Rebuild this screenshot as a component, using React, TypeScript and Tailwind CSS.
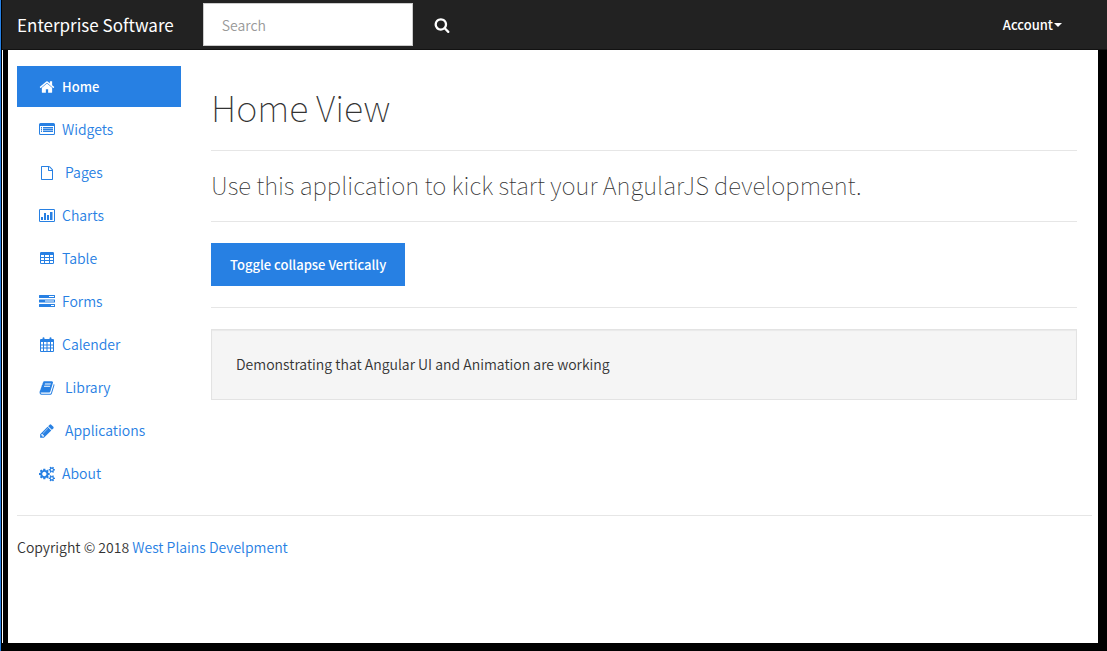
import { useState, type ReactNode } from "react";

function Glyph({ children }: { children: ReactNode }) {
  return (
    <svg viewBox="0 0 1792 1792" className="h-4 w-4 shrink-0 fill-current" aria-hidden="true">
      {children}
    </svg>
  );
}

const HomeIcon = () => (
  <Glyph>
    <path d="M1472 992v480q0 26-19 45t-45 19h-384v-384h-256v384h-384q-26 0-45-19t-19-45v-480q0-1 .5-3t.5-3l575-474 575 474q1 2 1 6zm223-69l-62 74q-8 9-21 11h-3q-13 0-21-7l-692-577-692 577q-12 8-24 7-13-2-21-11l-62-74q-8-10-7-23.5t11-21.5l719-599q32-26 76-26t76 26l244 204v-195q0-14 9-23t23-9h192q14 0 23 9t9 23v408l219 182q10 8 11 21.5t-7 23.5z" />
  </Glyph>
);

const ListIcon = () => (
  <svg viewBox="0 0 16 16" className="h-4 w-4 shrink-0 fill-current" aria-hidden="true">
    <path fillRule="evenodd" d="M1.5 1h13A1.5 1.5 0 0 1 16 2.500v9a1.500 1.500 0 0 1-1.500 1.500h-13A1.500 1.500 0 0 1 0 11.500v-9A1.500 1.500 0 0 1 1.500 1zM1 4v7.500c0 .300.200.500.500.500h13c.300 0 .500-.200.500-.500V4z" />
    <path d="M2 5h1v1H2zM4 5h10v1H4zM2 7h1v1H2zM4 7h10v1H4zM2 9h1v1H2zM4 9h10v1H4z" />
    <path opacity=".5" d="M2 6h1v1H2zM4 6h10v1H4zM2 8h1v1H2zM4 8h10v1H4z" />
  </svg>
);

const FileIcon = () => (
  <svg viewBox="0 0 1792 1792" className="mx-px h-[14px] w-[14px] shrink-0 fill-current" aria-hidden="true">
    <path d="M1596 380q28 28 48 76t20 88v1152q0 40-28 68t-68 28h-1344q-40 0-68-28t-28-68v-1600q0-40 28-68t68-28h896q40 0 88 20t76 48zm-444-244v376h376q-10-29-22-41l-313-313q-12-12-41-22zm384 1528v-1024h-416q-40 0-68-28t-28-68v-416h-768v1536h1280z" />
  </svg>
);

const ChartIcon = () => (
  <svg viewBox="0 0 16 16" className="h-4 w-4 shrink-0 fill-current" aria-hidden="true">
    <path fillRule="evenodd" d="M1.200 1h13.600Q16 1 16 2.200v10.600q0 1.200-1.200 1.200H1.200Q0 14 0 12.800V2.200Q0 1 1.200 1zM1 2v11h14V2z" />
    <path d="M2 9h2v3H2zM5 5h2v7H5zM8 7h2v5H8zM11 4h2.500v8H11z" />
  </svg>
);

const TableIcon = () => (
  <svg viewBox="0 0 16 16" className="h-4 w-4 shrink-0 fill-current" aria-hidden="true">
    <path fillRule="evenodd" d="M2.200 1h11.600Q15 1 15 2.200v9.600q0 1.200-1.200 1.200H2.200Q1 13 1 11.800V2.200Q1 1 2.200 1zM2 4v2h3V4zM6 4v2h4V4zM11 4v2H14V4zM2 7v2h3V7zM6 7v2h4V7zM11 7v2H14V7zM2 10v2h3v-2zM6 10v2h4v-2zM11 10v2H14v-2z" />
  </svg>
);

const TasksIcon = () => (
  <svg viewBox="0 0 16 16" className="h-4 w-4 shrink-0 fill-current" aria-hidden="true">
    <path fillRule="evenodd" d="M.500 1h15q.500 0 .500.500v2q0 .500-.500.500H.500Q0 4 0 3.500v-2Q0 1 .500 1zM10 2v1h5V2zM.500 5.500h15q.500 0 .500.500v2q0 .500-.500.500H.500Q0 8.500 0 8V6q0-.500.500-.500zM6 6.500v1h9v-1zM.500 10h15q.500 0 .500.500v2q0 .500-.500.500H.500q-.500 0-.500-.500v-2q0-.500.500-.500zM12 11v1h3v-1z" />
  </svg>
);

const CalendarIcon = () => (
  <svg viewBox="0 0 16 16" className="h-4 w-4 shrink-0 fill-current" aria-hidden="true">
    <path fillRule="evenodd" d="M2 2h1.500V1.500Q3.500.200 4.500.200t1 1.300V2h5V1.500q0-1.300 1-1.300t1 1.300V2H14q1 0 1 1v11q0 1-1 1H2q-1 0-1-1V3q0-1 1-1zM2 5v2.500h2V5zM5 5v2.500h2.500V5zM8.500 5v2.500H11V5zM12 5v2.500h2V5zM2 8.500v2h2v-2zM5 8.500v2h2.500v-2zM8.500 8.500v2H11v-2zM12 8.500v2h2v-2zM2 11.500V14h2v-2.500zM5 11.500V14h2.500v-2.500zM8.500 11.500V14H11v-2.500zM12 11.500V14h2v-2.500z" />
  </svg>
);

const BookIcon = () => (
  <Glyph>
    <path d="M1703 478q40 57 18 129l-275 906q-19 64-76.5 107.5t-122.5 43.5h-923q-77 0-148.5-53.5t-99.5-131.5q-24-67-2-127 0-4 3-27t4-37q1-8-3-21.5t-3-19.5q2-11 8-21t16.5-23.5 16.5-23.5q23-38 45-91.5t30-91.5q3-10 .5-30t-.5-28q3-11 17-28t17-23q21-36 42-92t25-90q1-9-2.5-32t.5-28q4-13 22-30.5t22-22.5q19-26 42.5-84.5t27.5-96.5q1-8-3-25.5t-2-26.5q2-8 9-18t18-23 17-21q8-12 16.5-30.5t15-35 16-36 19.5-32 26.5-23.5 36-11.5 47.5 5.5l-1 3q38-9 51-9h761q74 0 114 56t18 130l-274 906q-36 119-71.5 153.5t-128.5 34.5h-869q-27 0-38 15-11 16-1 43 24 70 144 70h923q29 0 56-15.5t35-41.5l300-987q7-22 5-57 38 15 59 43zm-1064 2q-4 13 2 22.5t20 9.5h608q13 0 25.5-9.5t16.5-22.5l21-64q4-13-2-22.5t-20-9.5h-608q-13 0-25.5 9.5t-16.5 22.5zm-83 256q-4 13 2 22.5t20 9.5h608q13 0 25.5-9.5t16.5-22.5l21-64q4-13-2-22.5t-20-9.5h-608q-13 0-25.5 9.5t-16.5 22.5z" />
  </Glyph>
);

const PencilIcon = () => (
  <Glyph>
    <path d="M491 1536l91-91-235-235-91 91v107h128v128h107zm523-928q0-22-22-22-10 0-17 7l-542 542q-7 7-7 17 0 22 22 22 10 0 17-7l542-542q7-7 7-17zm-54-192l416 416-832 832h-416v-416zm683 96q0 53-37 90l-166 166-416-416 166-165q36-38 90-38 53 0 91 38l235 234q37 39 37 91z" />
  </Glyph>
);

const CogsIcon = () => (
  <svg viewBox="0 0 1920 1792" className="h-4 w-4 shrink-0 fill-current" aria-hidden="true">
    <path d="M896 896q0-106-75-181t-181-75-181 75-75 181 75 181 181 75 181-75 75-181zm768 512q0-52-38-90t-90-38-90 38-38 90q0 53 37.5 90.5t90.5 37.5 90.5-37.5 37.5-90.5zm0-1024q0-52-38-90t-90-38-90 38-38 90q0 53 37.5 90.5t90.5 37.5 90.5-37.5 37.5-90.5zm-384 421v185q0 10-7 19.5t-16 10.5l-155 24q-11 35-32 76 34 48 90 115 7 11 7 20 0 12-7 19-23 30-82.5 89.5t-78.5 59.5q-11 0-21-7l-115-90q-37 19-77 31-11 108-23 155-7 24-30 24h-186q-11 0-20-7.5t-10-17.5l-23-153q-34-10-75-31l-118 89q-7 7-20 7-11 0-21-8-144-133-144-160 0-9 7-19 10-14 41-53t47-61q-23-44-35-82l-152-24q-10-1-17-9.5t-7-19.5v-185q0-10 7-19.5t16-10.5l155-24q11-35 32-76-34-48-90-115-7-11-7-20 0-12 7-20 22-30 82-89t79-59q11 0 21 7l115 90q34-18 77-32 11-108 23-154 7-24 30-24h186q11 0 20 7.5t10 17.5l23 153q34 10 75 31l118-89q8-7 20-7 11 0 21 8 144 133 144 160 0 8-7 19-12 16-42 54t-45 60q23 48 34 82l152 23q10 2 17 10.5t7 19.5zm640 533v140q0 16-149 31-12 27-30 52 51 113 51 138 0 4-4 7-122 71-124 71-8 0-46-47t-52-68q-20 2-30 2t-30-2q-14 21-52 68t-46 47q-2 0-124-71-4-3-4-7 0-25 51-138-18-25-30-52-149-15-149-31v-140q0-16 149-31 13-29 30-52-51-113-51-138 0-4 4-7 4-2 35-20t59-34 30-16q8 0 46 46.5t52 67.5q20-2 30-2t30 2q51-71 92-112l6-2q4 0 124 70 4 3 4 7 0 25-51 138 17 23 30 52 149 15 149 31zm0-1024v140q0 16-149 31-12 27-30 52 51 113 51 138 0 4-4 7-122 71-124 71-8 0-46-47t-52-68q-20 2-30 2t-30-2q-14 21-52 68t-46 47q-2 0-124-71-4-3-4-7 0-25 51-138-18-25-30-52-149-15-149-31v-140q0-16 149-31 13-29 30-52-51-113-51-138 0-4 4-7 4-2 35-20t59-34 30-16q8 0 46 46.5t52 67.5q20-2 30-2t30 2q51-71 92-112l6-2q4 0 124 70 4 3 4 7 0 25-51 138 17 23 30 52 149 15 149 31z" />
  </svg>
);

const SearchIcon = () => (
  <Glyph>
    <path d="M1216 832q0-185-131.500-316.500t-316.500-131.500-316.500 131.500-131.500 316.500 131.500 316.500 316.500 131.500 316.500-131.500 131.500-316.500zm512 832q0 52-38 90t-90 38q-54 0-90-38l-343-342q-179 124-399 124-143 0-273.500-55.500t-225-150-150-225-55.500-273.500 55.500-273.500 150-225 225-150 273.500-55.500 273.500 55.500 225 150 150 225 55.500 273.500q0 220-124 399l343 343q37 37 37 90z" />
  </Glyph>
);

const items = [
  { label: "Home", Icon: HomeIcon, wide: false },
  { label: "Widgets", Icon: ListIcon, wide: false },
  { label: "Pages", Icon: FileIcon, wide: true },
  { label: "Charts", Icon: ChartIcon, wide: false },
  { label: "Table", Icon: TableIcon, wide: false },
  { label: "Forms", Icon: TasksIcon, wide: false },
  { label: "Calender", Icon: CalendarIcon, wide: false },
  { label: "Library", Icon: BookIcon, wide: true },
  { label: "Applications", Icon: PencilIcon, wide: true },
  { label: "About", Icon: CogsIcon, wide: false },
];

export default function App() {
  const [active, setActive] = useState("Home");
  const [open, setOpen] = useState(true);

  return (
    <div className="flex min-h-screen border-l border-[#2780e3] bg-black font-['Noto_Sans_CJK_SC','Noto_Sans',sans-serif] text-[14px] leading-[21px] font-[350] text-[#333]">
      <div className="ml-px flex min-w-0 flex-1 flex-col">
        <header className="flex h-[50px] items-center border-b border-[#121212] bg-[#222] pr-[45px] pl-[15px] text-white">
          <a href="#home" className="text-[17px] font-normal">Enterprise Software</a>
          <form className="ml-[29px] flex items-center gap-[21px]" onSubmit={(e) => e.preventDefault()}>
            <input
              type="search"
              aria-label="Search"
              placeholder="Search"
              className="h-[43px] w-[210px] border border-[#ccc] bg-white px-[18px] text-[#333] outline-none placeholder:text-[#999]"
            />
            <button type="submit" aria-label="Submit search">
              <SearchIcon />
            </button>
          </form>
          <button type="button" className="ml-auto flex items-center text-[13px] font-medium">
            Account
            <span className="ml-px border-x-4 border-t-4 border-x-transparent border-t-white" />
          </button>
        </header>

        <div className="mr-[9px] mb-2 flex flex-1 border-l border-white">
          <div className="min-w-0 flex-1 border-l-5 border-black bg-white pt-4 pr-[6px] pl-[9px]">
            <div className="flex gap-[30px]">
              <nav className="flex w-[164px] shrink-0 flex-col gap-[2px]">
                {items.map(({ label, Icon, wide }) => (
                  <a
                    key={label}
                    href={"#" + label.toLowerCase()}
                    onClick={() => setActive(label)}
                    className={
                      "flex h-[41px] items-center pl-[22px] " +
                      (wide ? "gap-[10px] " : "gap-[7px] ") +
                      (active === label ? "bg-[#2780e3] text-[13px] font-medium text-white" : "text-[#2780e3]")
                    }
                  >
                    <Icon />
                    {label}
                  </a>
                ))}
              </nav>
              <main className="min-w-0 flex-1 pt-[18px] pr-[15px]">
                <h1 className="text-[36px] leading-[44px] font-thin">Home View</h1>
                <hr className="mt-[22px] border-[#e6e6e6]" />
                <h2 className="mt-[19px] mb-[21px] text-[24px] leading-[30px] font-thin">
                  Use this application to kick start your AngularJS development.
                </h2>
                <hr className="border-[#e6e6e6]" />
                <button
                  type="button"
                  onClick={() => setOpen(!open)}
                  className="mt-[21px] h-[43px] bg-[#2780e3] px-[19px] text-[13px] font-medium text-white"
                >
                  Toggle collapse Vertically
                </button>
                <hr className="my-[21px] border-[#e6e6e6]" />
                {open && (
                  <div className="border border-[#e3e3e3] bg-[#f5f5f5] p-6 shadow-[inset_0_1px_1px_rgba(0,0,0,0.05)]">
                    Demonstrating that Angular UI and Animation are working
                  </div>
                )}
              </main>
            </div>
            <footer className="mt-[21px] border-t border-[#e6e6e6] pt-[21px]">
              Copyright © 2018{" "}
              <a href="#company" className="text-[#2780e3]">West Plains Develpment</a>
            </footer>
          </div>
        </div>
      </div>
    </div>
  );
}
